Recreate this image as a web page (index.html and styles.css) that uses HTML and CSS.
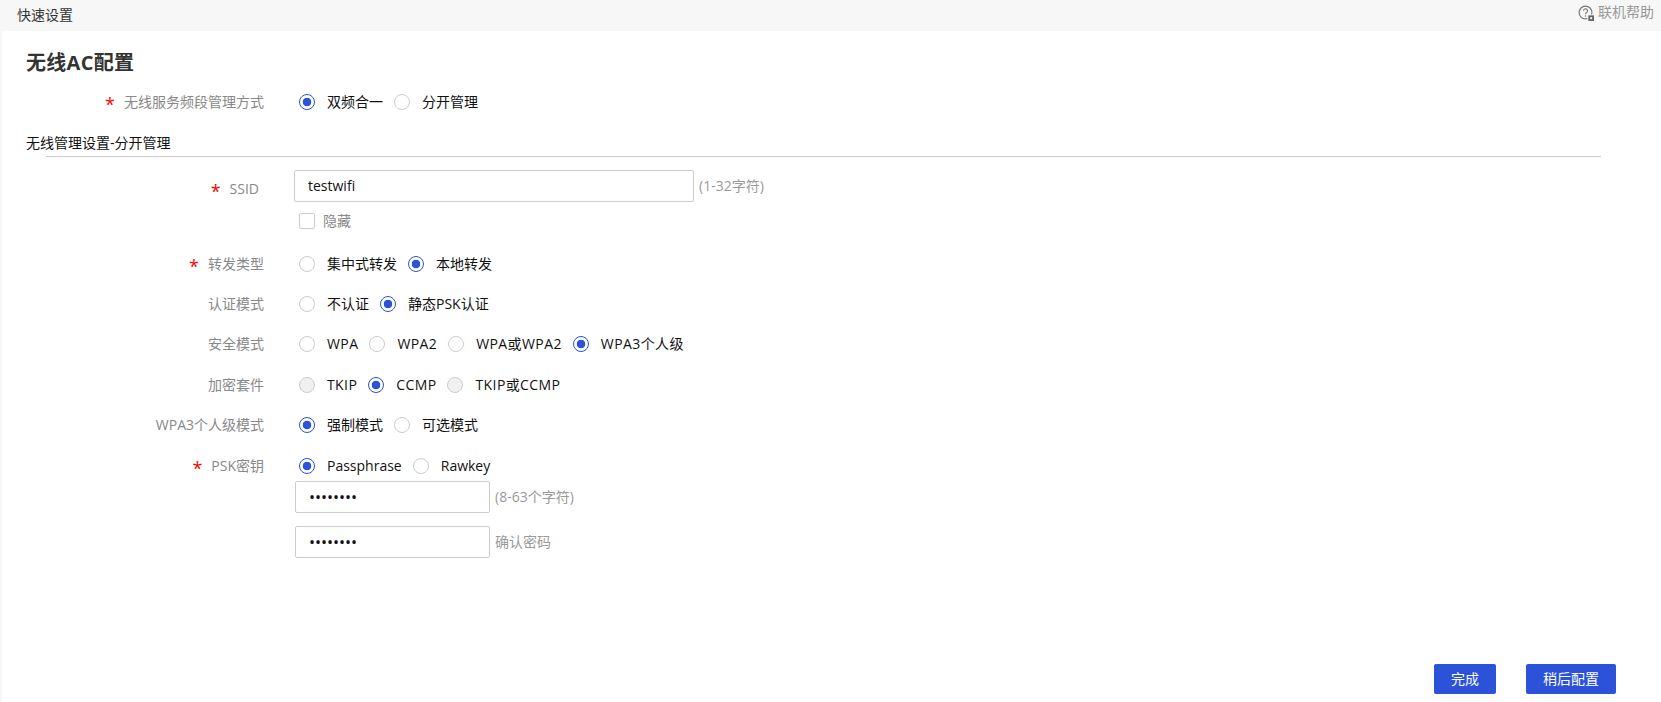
FILE: index.html
```html
<!DOCTYPE html>
<html lang="zh-CN">
<head>
<meta charset="utf-8">
<title>快速设置</title>
<link rel="stylesheet" href="styles.css">
</head>
<body>
<header class="topbar">
  <span class="topbar-title">快速设置</span>
  <a class="help">
    <svg class="help-icon" width="16" height="16" viewBox="0 0 17 17">
      <circle cx="8" cy="8" r="6.8" fill="none" stroke="#777" stroke-width="1.2"/>
      <path d="M5.9 6.2a2.1 2.1 0 1 1 3.3 1.7c-.8.5-1.2 1-1.2 1.9" fill="none" stroke="#777" stroke-width="1.2"/>
      <circle cx="8" cy="11.6" r=".8" fill="#777"/>
      <rect x="10" y="10" width="7" height="7" fill="#f7f7f7"/>
      <rect x="11" y="11" width="6" height="6" fill="#666"/>
      <rect x="13" y="13" width="2" height="2" fill="#fff"/>
    </svg>
    联机帮助
  </a>
</header>
<main class="page">
  <h1 class="title">无线AC配置</h1>
  <form class="form">
    <div class="row row-first">
      <div class="label"><span class="req">*</span>无线服务频段管理方式</div>
      <div class="choices">
        <label class="choice"><input type="radio" name="band" checked>双频合一</label>
        <label class="choice"><input type="radio" name="band">分开管理</label>
      </div>
    </div>
    <div class="section">无线管理设置-分开管理</div>
    <div class="divider"></div>

    <div class="ssid">
      <div class="label label-ssid"><span class="req">*</span>SSID</div>
      <input class="text-input input-wide" type="text" value="testwifi">
      <span class="hint">(1-32字符)</span>
    </div>
    <label class="hide-check"><input type="checkbox">隐藏</label>

    <div class="row row-forward">
      <div class="label"><span class="req">*</span>转发类型</div>
      <div class="choices">
        <label class="choice"><input type="radio" name="fwd">集中式转发</label>
        <label class="choice"><input type="radio" name="fwd" checked>本地转发</label>
      </div>
    </div>
    <div class="row">
      <div class="label">认证模式</div>
      <div class="choices">
        <label class="choice"><input type="radio" name="auth">不认证</label>
        <label class="choice"><input type="radio" name="auth" checked>静态PSK认证</label>
      </div>
    </div>
    <div class="row">
      <div class="label">安全模式</div>
      <div class="choices caps">
        <label class="choice"><input type="radio" name="sec">WPA</label>
        <label class="choice"><input type="radio" name="sec">WPA2</label>
        <label class="choice"><input type="radio" name="sec">WPA或WPA2</label>
        <label class="choice"><input type="radio" name="sec" checked>WPA3个人级</label>
      </div>
    </div>
    <div class="row">
      <div class="label">加密套件</div>
      <div class="choices caps">
        <label class="choice"><input type="radio" name="enc" disabled>TKIP</label>
        <label class="choice"><input type="radio" name="enc" checked>CCMP</label>
        <label class="choice"><input type="radio" name="enc" disabled>TKIP或CCMP</label>
      </div>
    </div>
    <div class="row">
      <div class="label">WPA3个人级模式</div>
      <div class="choices">
        <label class="choice"><input type="radio" name="mode" checked>强制模式</label>
        <label class="choice"><input type="radio" name="mode">可选模式</label>
      </div>
    </div>
    <div class="row">
      <div class="label"><span class="req">*</span>PSK密钥</div>
      <div class="choices">
        <label class="choice"><input type="radio" name="psk" checked>Passphrase</label>
        <label class="choice"><input type="radio" name="psk">Rawkey</label>
      </div>
    </div>
    <div class="pw-line">
      <input class="text-input input-pw" type="password" value="12345678">
      <span class="hint">(8-63个字符)</span>
    </div>
    <div class="pw-line pw-confirm">
      <input class="text-input input-pw" type="password" value="12345678">
      <span class="hint">确认密码</span>
    </div>
  </form>
  <footer class="actions">
    <button class="btn btn-done" type="button">完成</button>
    <button class="btn btn-later" type="button">稍后配置</button>
  </footer>
</main>
</body>
</html>
```
FILE: styles.css
```css
* { box-sizing: border-box; }
html, body { margin: 0; padding: 0; height: 100%; }
body {
  height: 702px;
  overflow: hidden;
  display: flex;
  flex-direction: column;
  background: #fff;
  color: #111;
  font: 14px/20px "Open Sans", "Noto Sans CJK SC", "Noto Sans", sans-serif;
}
input, button { font: inherit; margin: 0; }

.topbar {
  height: 31px;
  flex: none;
  background: #f7f7f7;
  display: flex;
  justify-content: space-between;
  padding: 5px 7px 0 17px;
}
.topbar-title { color: #333; line-height: 20px; }
.help {
  display: flex;
  gap: 4px;
  color: #999;
  height: 20px;
  line-height: 14px;
  font-size: 14px;
}
.help-icon { flex: none; }

.page {
  flex: 1;
  display: flex;
  flex-direction: column;
  border-left: 2px solid #f7f7f7;
  padding: 18px 45px 8px 0;
}
.title {
  margin: 0 0 10px 24px;
  font-size: 20px;
  line-height: 28px;
  font-weight: 700;
  color: #333;
  letter-spacing: .3px;
}

.row {
  display: flex;
  align-items: center;
  height: 40.4px;
}
.row-first { height: 30px; }
.row-forward { margin-top: 14.5px; }
.label {
  width: 262px;
  flex: none;
  text-align: right;
  color: #888;
}
.req {
  color: #f00;
  font-size: 18px;
  line-height: 0;
  vertical-align: -4px;
  margin-right: 9px;
}
.choices {
  display: flex;
  gap: 11px;
  margin-left: 35px;
}
.caps { letter-spacing: .4px; }
.choice {
  display: flex;
  align-items: center;
  gap: 12px;
  color: #111;
}
.choice input {
  appearance: none;
  width: 16px;
  height: 16px;
  border: 1px solid #ccc;
  border-radius: 50%;
  background: #fff;
}
.choice input:checked {
  border-color: #2b52d9;
  background: radial-gradient(circle, #2b52d9 0 4px, #fff 4.6px);
}
.choice input:disabled {
  background: #f0f0f0;
}

.section {
  margin: 16px 0 0 24px;
  line-height: 20px;
  color: #111;
}
.divider {
  margin: 3px 15px 0 44px;
  height: 1px;
  background: #ccc;
}

.ssid {
  display: flex;
  align-items: center;
  margin-top: 13px;
  height: 32px;
}
.label-ssid { width: 257px; padding-top: 6px; }
.text-input {
  height: 32px;
  border: 1px solid #ccc;
  border-radius: 2px;
  color: #111;
  padding: 0 13px;
  outline: none;
  background: #fff;
}
.input-wide { width: 400px; margin-left: 35px; padding-bottom: 2px; }
.input-pw { width: 195px; font-size: 16px; }
.hint { color: #999; margin-left: 5px; }

.hide-check {
  display: flex;
  align-items: center;
  gap: 8px;
  margin: 11px 0 0 297px;
  height: 16px;
  color: #888;
}
.hide-check input {
  appearance: none;
  width: 16px;
  height: 16px;
  border: 1px solid #ccc;
  border-radius: 2px;
  background: #fff;
}

.pw-line {
  display: flex;
  align-items: center;
  margin: -5px 0 0 293px;
}
.pw-confirm { margin-top: 13px; }

.actions {
  margin-top: auto;
  display: flex;
  justify-content: flex-end;
  gap: 30px;
}
.btn {
  height: 30px;
  border: none;
  border-radius: 2px;
  background: #2b52d9;
  color: #fff;
  padding: 0;
}
.btn-done { width: 62px; }
.btn-later { width: 90px; }
```
